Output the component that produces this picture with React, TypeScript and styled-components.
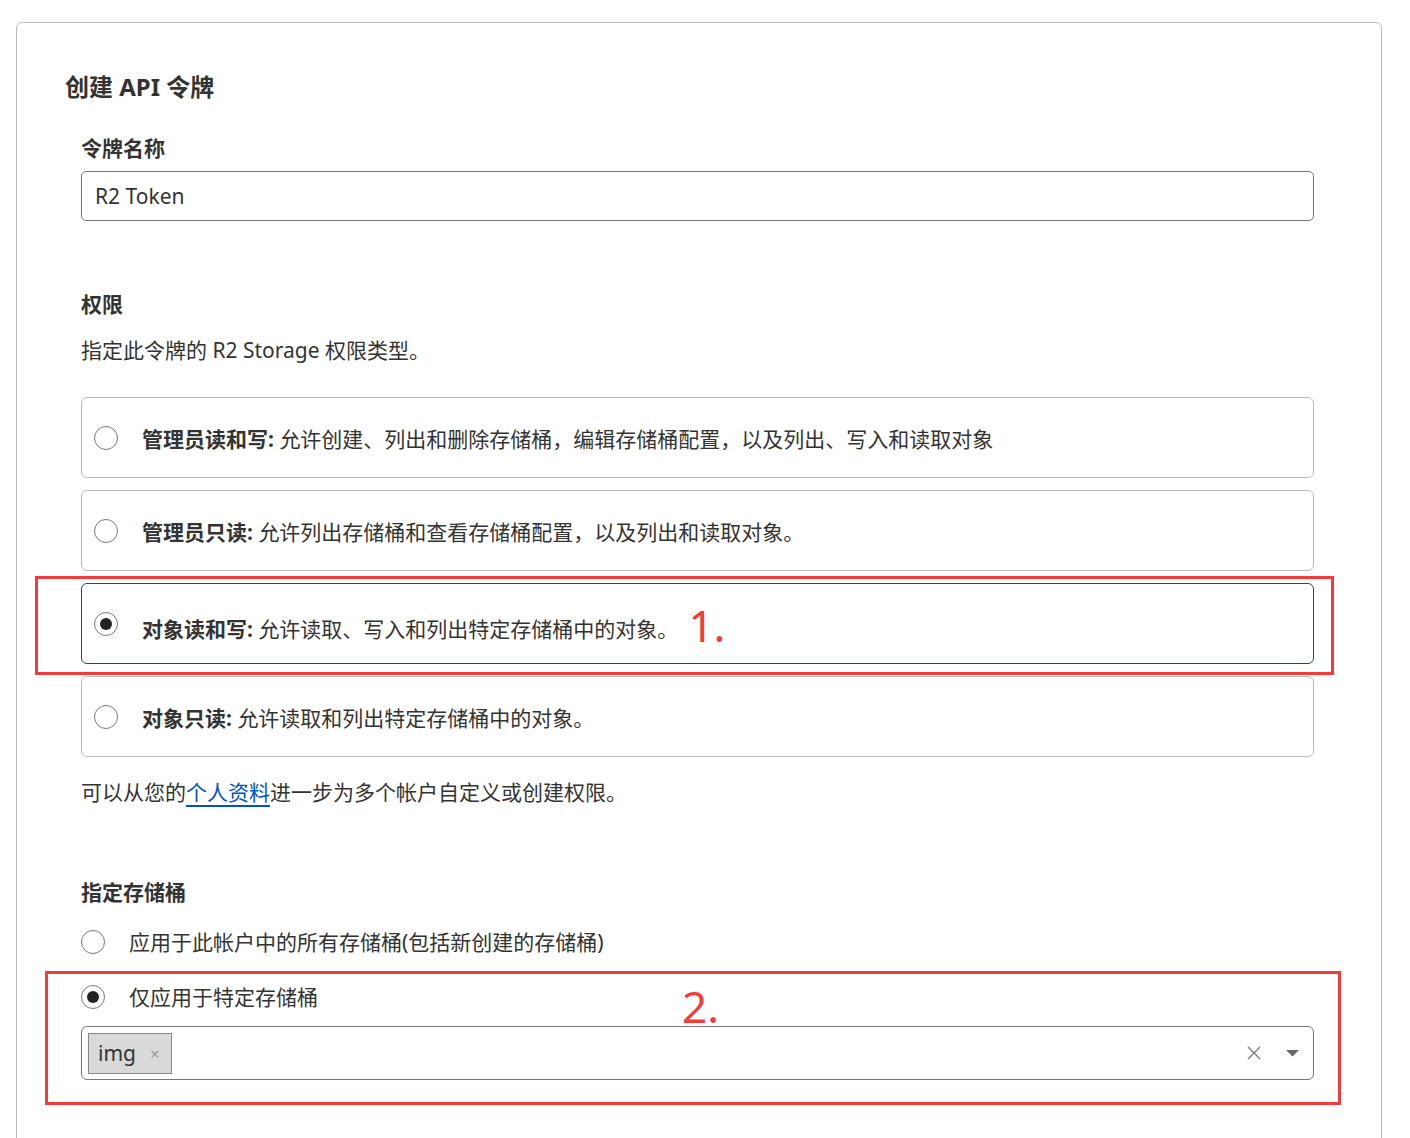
import React, { useState } from "react";
import styled, { createGlobalStyle } from "styled-components";

const GlobalStyle = createGlobalStyle`
  * { box-sizing: border-box; }
  body {
    margin: 0;
    background: #fff;
    color: #333;
    font-family: "Noto Sans", "Noto Sans CJK SC", sans-serif;
  }
`;

const Page = styled.div`
  padding: 22px 28px 0 16px;
`;

const Card = styled.div`
  border: 1px solid #bbb;
  border-radius: 6px;
  padding: 48px 67px 80px 48px;
`;

const Title = styled.h2`
  margin: 0;
  font-size: 24px;
  line-height: 32px;
  font-weight: 700;
  color: #333;
`;

const Form = styled.div`
  padding: 0 0 0 16px;
`;

const Label = styled.div<{ $top: number }>`
  margin-top: ${(p) => p.$top}px;
  font-size: 21px;
  line-height: 30px;
  font-weight: 700;
  color: #333;
`;

const TextInput = styled.input`
  display: block;
  width: 100%;
  height: 50px;
  margin-top: 8px;
  padding: 0 13px;
  border: 1px solid #777;
  border-radius: 5px;
  font-family: inherit;
  font-size: 21px;
  color: #333;
  outline: none;
`;

const Text = styled.p<{ $top: number }>`
  margin: ${(p) => p.$top}px 0 0;
  font-size: 21px;
  line-height: 30px;
  color: #333;
`;

const OptionList = styled.div`
  display: flex;
  flex-direction: column;
  gap: 12px;
  margin-top: 32px;
`;

const Option = styled.label<{ $active: boolean }>`
  position: relative;
  display: flex;
  align-items: center;
  gap: 24px;
  height: 81px;
  padding: 0 12px;
  border: 1px solid ${(p) => (p.$active ? "#0a47a9" : "#bbb")};
  border-radius: 6px;
  font-size: 21px;
  color: #333;
  cursor: pointer;
`;

const Radio = styled.span<{ $checked: boolean }>`
  flex: none;
  width: 24px;
  height: 24px;
  border-radius: 50%;
  border: 1px solid #777;
  background: #fff;
  display: flex;
  align-items: center;
  justify-content: center;
  &::after {
    content: "";
    display: ${(p) => (p.$checked ? "block" : "none")};
    width: 12px;
    height: 12px;
    border-radius: 50%;
    background: #222;
  }
`;

const Strong = styled.b`
  font-weight: 700;
`;

const Link = styled.a`
  color: #0051c3;
  text-decoration: underline;
  text-decoration-thickness: 2px;
  text-underline-offset: 5px;
`;

const RadioRow = styled.label<{ $top: number }>`
  display: flex;
  align-items: center;
  gap: 24px;
  margin-top: ${(p) => p.$top}px;
  font-size: 21px;
  line-height: 30px;
  color: #333;
  cursor: pointer;
`;

const Group = styled.div`
  position: relative;
`;

const Select = styled.div`
  display: flex;
  align-items: center;
  height: 54px;
  margin-top: 14px;
  padding: 0 14px 0 6px;
  border: 1px solid #777;
  border-radius: 6px;
`;

const Tag = styled.span`
  display: inline-flex;
  align-items: center;
  gap: 14px;
  height: 41px;
  padding: 0 11px 0 9px;
  background: #d9d9d9;
  border: 1px solid #8a8a8a;
  font-size: 21px;
  color: #333;
`;

const TagClose = styled.span`
  font-size: 17px;
  color: #999;
`;

const Spacer = styled.div`
  flex: 1;
`;

const Controls = styled.div`
  display: flex;
  align-items: center;
  gap: 25px;
`;

const Annotation = styled.div<{ $inset: string }>`
  position: absolute;
  inset: ${(p) => p.$inset};
  border: 3px solid #f23b3b;
  pointer-events: none;
`;

const Mark = styled.span`
  position: relative;
  top: 5px;
  margin-left: 10px;
  font-size: 44px;
  line-height: 30px;
  color: #f23b3b;
  font-family: "Noto Sans", sans-serif;
`;

const FloatingMark = styled.span`
  position: absolute;
  left: 634px;
  top: 2px;
  font-size: 44px;
  line-height: 60px;
  color: #f23b3b;
  font-family: "Noto Sans", sans-serif;
`;

const options = [
  {
    title: "管理员读和写:",
    text: "允许创建、列出和删除存储桶，编辑存储桶配置，以及列出、写入和读取对象",
  },
  {
    title: "管理员只读:",
    text: "允许列出存储桶和查看存储桶配置，以及列出和读取对象。",
  },
  { title: "对象读和写:", text: "允许读取、写入和列出特定存储桶中的对象。" },
  { title: "对象只读:", text: "允许读取和列出特定存储桶中的对象。" },
];

export default function App() {
  const [perm, setPerm] = useState(2);
  const [scope, setScope] = useState(1);

  return (
    <Page>
      <GlobalStyle />
      <Card>
        <Title>创建 API 令牌</Title>
        <Form>
          <Label $top={30}>令牌名称</Label>
          <TextInput defaultValue="R2 Token" />

          <Label $top={68}>权限</Label>
          <Text $top={16}>指定此令牌的 R2 Storage 权限类型。</Text>

          <OptionList>
            {options.map((o, i) => (
              <Option key={o.title} $active={perm === i} onClick={() => setPerm(i)}>
                <Radio $checked={perm === i} />
                <span>
                  <Strong>{o.title}</Strong> {o.text}
                  {i === 2 && <Mark>1.</Mark>}
                </span>
                {i === 2 && <Annotation $inset="-8px -21px -12px -47px" />}
              </Option>
            ))}
          </OptionList>

          <Text $top={20}>
            可以从您的<Link href="#">个人资料</Link>进一步为多个帐户自定义或创建权限。
          </Text>

          <Label $top={70}>指定存储桶</Label>
          <RadioRow $top={20} onClick={() => setScope(0)}>
            <Radio $checked={scope === 0} />
            应用于此帐户中的所有存储桶(包括新创建的存储桶)
          </RadioRow>
          <Group>
            <RadioRow $top={25} onClick={() => setScope(1)}>
              <Radio $checked={scope === 1} />
              仅应用于特定存储桶
            </RadioRow>
            <Select>
              <Tag>
                img<TagClose>×</TagClose>
              </Tag>
              <Spacer />
              <Controls>
                <svg width="14" height="14" viewBox="0 0 14 14">
                  <path d="M1 1L13 13M13 1L1 13" stroke="#777" strokeWidth="1.3" />
                </svg>
                <svg width="13" height="7" viewBox="0 0 13 7">
                  <path d="M0 0H13L6.5 6.5Z" fill="#666" />
                </svg>
              </Controls>
            </Select>
            <Annotation $inset="-11px -27px -25px -36px">
              <FloatingMark>2.</FloatingMark>
            </Annotation>
          </Group>
        </Form>
      </Card>
    </Page>
  );
}
